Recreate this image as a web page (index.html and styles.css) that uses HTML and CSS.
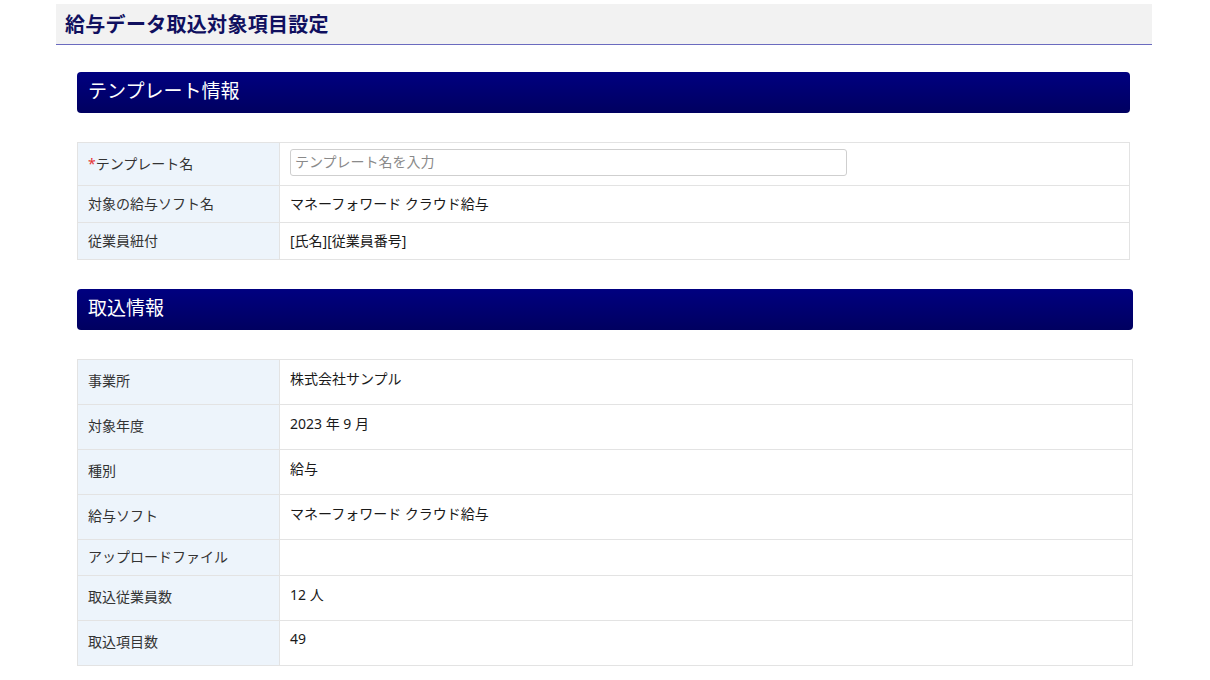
FILE: index.html
```html
<!DOCTYPE html>
<html lang="ja">
<head>
    <meta charset="UTF-8">
    <title>給与データ取込対象項目設定</title>
    <link rel="stylesheet" href="styles.css">
</head>
<body>
    <div class="page">
        <div class="page-header">
            <h1>給与データ取込対象項目設定</h1>
        </div>

        <div class="content">
            <!-- テンプレート情報 -->
            <section class="section section-template">
                <h2 class="section-title">テンプレート情報</h2>
                <table class="info-table">
                    <tr class="row-input">
                        <th><span class="required">*</span>テンプレート名</th>
                        <td><input type="text" class="text-input" placeholder="テンプレート名を入力"></td>
                    </tr>
                    <tr>
                        <th>対象の給与ソフト名</th>
                        <td>マネーフォワード クラウド給与</td>
                    </tr>
                    <tr>
                        <th>従業員紐付</th>
                        <td>[氏名][従業員番号]</td>
                    </tr>
                </table>
            </section>

            <!-- 取込情報 -->
            <section class="section section-import">
                <h2 class="section-title">取込情報</h2>
                <table class="info-table import-table">
                    <tr>
                        <th>事業所</th>
                        <td>株式会社サンプル</td>
                    </tr>
                    <tr>
                        <th>対象年度</th>
                        <td>2023 年 9 月</td>
                    </tr>
                    <tr>
                        <th>種別</th>
                        <td>給与</td>
                    </tr>
                    <tr>
                        <th>給与ソフト</th>
                        <td>マネーフォワード クラウド給与</td>
                    </tr>
                    <tr class="row-short">
                        <th>アップロードファイル</th>
                        <td></td>
                    </tr>
                    <tr>
                        <th>取込従業員数</th>
                        <td>12 人</td>
                    </tr>
                    <tr>
                        <th>取込項目数</th>
                        <td>49</td>
                    </tr>
                </table>
            </section>
        </div>
    </div>
</body>
</html>
```

FILE: styles.css
```css
* {
    margin: 0;
    padding: 0;
    box-sizing: border-box;
}

body {
    background: #fff;
    font-family: "Noto Sans", "Noto Sans CJK JP", sans-serif;
    font-size: 14px;
    color: #222;
}

.page {
    width: 1096px;
    margin: 4px 0 0 56px;
}

.page-header {
    height: 41px;
    background: #f2f2f2;
    border-bottom: 1px solid #6b6bbf;
    padding: 0 9px 2px;
    display: flex;
    align-items: center;
}

.page-header h1 {
    font-size: 20px;
    font-weight: 700;
    color: #10105f;
    letter-spacing: 0.3px;
}

.content {
    padding: 27px 19px 0 21px;
}

.section {
    margin-bottom: 29px;
}

.section-template {
    margin-right: 3px;
}

.section-title {
    height: 41px;
    display: flex;
    align-items: center;
    padding: 0 11px 5px;
    background: linear-gradient(#000080, #000060);
    border-radius: 4px;
    color: #fff;
    font-size: 19px;
    font-weight: 400;
    margin-bottom: 29px;
}

.info-table {
    width: 100%;
    border-collapse: collapse;
    border: 1px solid #e3e3e3;
}

.info-table th,
.info-table td {
    border: 1px solid #e3e3e3;
    height: 37px;
    padding: 0 10px 3px;
    text-align: left;
    font-weight: 400;
}

.info-table th {
    width: 202px;
    background: #edf4fb;
    color: #333;
}

.info-table td {
    color: #1a1a1a;
}

.row-input th,
.row-input td {
    height: 43px;
}

.required {
    color: #e53333;
}

.text-input {
    width: 557px;
    height: 27px;
    border: 1px solid #cfcfcf;
    border-radius: 3px;
    padding: 0 4px 2px;
    font-family: inherit;
    font-size: 14px;
    color: #333;
}

.text-input::placeholder {
    color: #8a8a8a;
}

.import-table th,
.import-table td {
    height: 45px;
}

.import-table th {
    padding-bottom: 5px;
}

.import-table td {
    vertical-align: top;
    padding-top: 8px;
}

.import-table .row-short th,
.import-table .row-short td {
    height: 36px;
    padding-top: 0;
    padding-bottom: 3px;
    vertical-align: middle;
}
```
